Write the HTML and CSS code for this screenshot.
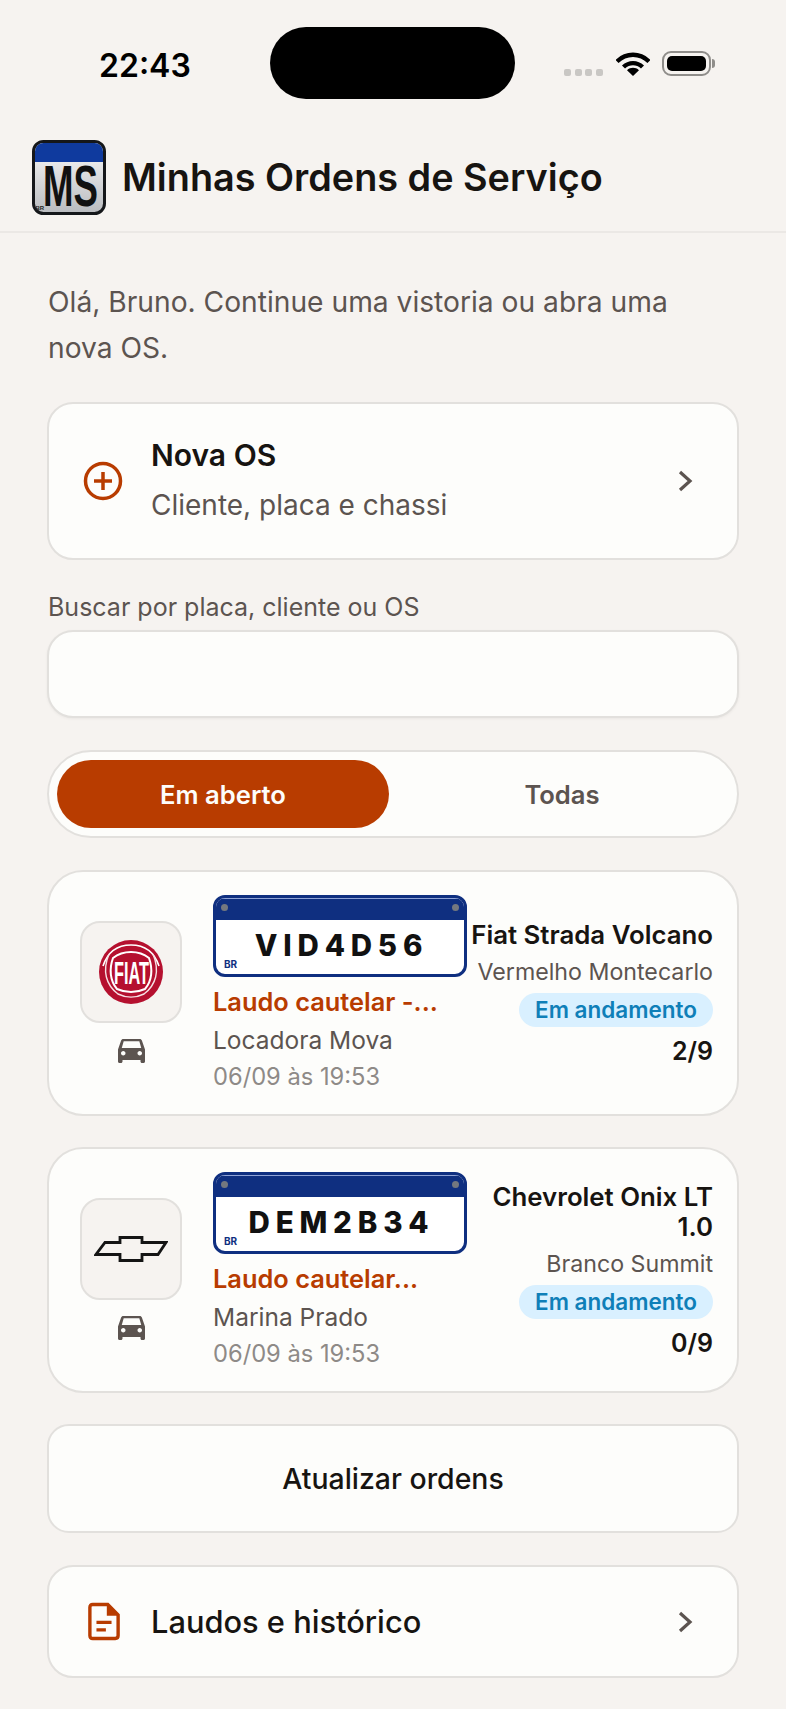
FILE: index.html
```html
<!DOCTYPE html>
<html lang="pt-BR">
    <head>
        <meta charset="utf-8">
        <title>Minhas Ordens de Serviço</title>
        <link rel="stylesheet" href="styles.css">
    </head>
    <body>
        <div class="statusbar">
            <span class="time">22:43</span>
            <div class="island"></div>
            <div class="status-icons">
                <div class="signal"><i></i><i></i><i></i><i></i></div>
                <svg class="wifi" width="34" height="24" viewBox="0 0 34 24">
                    <path d="M1 9.5C10 0.5 24 0.5 33 9.5" fill="none" stroke="#000" stroke-width="4.4"/>
                    <path d="M7.5 15C13 9.8 21 9.8 26.5 15" fill="none" stroke="#000" stroke-width="4.4"/>
                    <path d="M11 18.2C14.6 15 19.4 15 23 18.2L17 24Z" fill="#000"/>
                </svg>
                <div class="battery"><div class="battery-fill"></div></div>
            </div>
        </div>

        <header class="topbar">
            <svg class="logo" width="74" height="75" viewBox="0 0 74 75">
                <defs>
                    <linearGradient id="plateGrey" x1="0" y1="0" x2="0" y2="1">
                        <stop offset="0" stop-color="#fbfbfb"/>
                        <stop offset="1" stop-color="#b9bbbf"/>
                    </linearGradient>
                </defs>
                <rect x="1.5" y="1.5" width="71" height="72" rx="10" fill="url(#plateGrey)" stroke="#15171a" stroke-width="3"/>
                <path d="M3 22V11.500A8.500 8.500 0 0 1 11.500 3H62.500A8.500 8.500 0 0 1 71 11.500V22Z" fill="#0f3a9e"/>
                <text x="11" y="66" class="logo-ms" textLength="55" lengthAdjust="spacingAndGlyphs">MS</text>
                <text x="3.500" y="70" class="logo-br">BR</text>
            </svg>
            <h1>Minhas Ordens de Serviço</h1>
        </header>

        <main class="content">
            <p class="intro">Olá, Bruno. Continue uma vistoria ou abra uma nova OS.</p>

            <div class="card nova">
                <svg class="nova-icon" width="40" height="40" viewBox="0 0 40 40">
                    <circle cx="20" cy="20" r="17.500" fill="none" stroke="#b83c00" stroke-width="3.500"/>
                    <path d="M20 11V29M11 20H29" fill="none" stroke="#b83c00" stroke-width="3.500"/>
                </svg>
                <div class="nova-text">
                    <div class="nova-title">Nova OS</div>
                    <div class="nova-sub">Cliente, placa e chassi</div>
                </div>
                <svg class="chevron" width="16" height="24" viewBox="0 0 16 24">
                    <path d="M3 3L13 12L3 21" fill="none" stroke="#5c5450" stroke-width="3.200"/>
                </svg>
            </div>

            <label class="search-label" for="busca">Buscar por placa, cliente ou OS</label>
            <input class="search" id="busca" type="text">

            <div class="segment">
                <div class="seg-item active">Em aberto</div>
                <div class="seg-item">Todas</div>
            </div>

            <div class="card os">
                <div class="brand-col">
                    <div class="brand-tile">
                        <svg class="brand-logo" width="66" height="66" viewBox="0 0 66 66">
                            <circle cx="33" cy="33" r="32" fill="#b5102f"/>
                            <path d="M5 27C10 12 21 6 33 6S56 12 61 27" fill="none" stroke="#fff" stroke-width="1.600"/>
                            <path d="M11 15C4 32 8 46 20 55C28 59 38 59 46 55C58 46 62 32 55 15" fill="none" stroke="#f6dfe3" stroke-width="1.400"/>
                            <path d="M15 19C25 11 41 11 51 19C55 30 54 42 47 50C38 54 28 54 19 50C12 42 11 30 15 19Z" fill="#b5102f" stroke="#fff" stroke-width="2"/>
                            <text x="16" y="45" class="fiat-text" textLength="35" lengthAdjust="spacingAndGlyphs">FIAT</text>
                        </svg>
                    </div>
                    <svg class="car" width="27" height="24" viewBox="3 5 18 16">
                        <path fill="#5c5450" d="M18.920 6.010C18.720 5.420 18.160 5 17.500 5h-11c-.66 0-1.210.42-1.420 1.010L3 12v8c0 .55.45 1 1 1h1c.55 0 1-.45 1-1v-1h12v1c0 .55.45 1 1 1h1c.55 0 1-.45 1-1v-8l-2.080-5.990zM6.500 16c-.83 0-1.500-.67-1.500-1.500S5.670 13 6.500 13s1.500.67 1.500 1.500S7.330 16 6.500 16zm11 0c-.83 0-1.500-.67-1.500-1.500s.67-1.500 1.500-1.500 1.500.67 1.500 1.500-.67 1.500-1.500 1.500zM5.500 11l1.300-4.500h10.400L18.500 11z"/>
                    </svg>
                </div>
                <div class="os-main">
                    <div class="plate">
                        <div class="plate-top"><i></i><i></i></div>
                        <div class="plate-num">VID4D56</div>
                        <span class="plate-br">BR</span>
                    </div>
                    <div class="os-type">Laudo cautelar -...</div>
                    <div class="os-client">Locadora Mova</div>
                    <div class="os-date">06/09 às 19:53</div>
                </div>
                <div class="os-side">
                    <div class="os-car">Fiat Strada Volcano</div>
                    <div class="os-color">Vermelho Montecarlo</div>
                    <div class="badge">Em andamento</div>
                    <div class="os-count">2/9</div>
                </div>
            </div>

            <div class="card os">
                <div class="brand-col">
                    <div class="brand-tile">
                        <svg width="74" height="26" viewBox="0 0 74 26">
                            <path d="M11 6.500H26V1.500H48V6.500H72L64 18.500H48V24.500H26V18.500H2Z" fill="#f6f3f0" stroke="#141414" stroke-width="2.800"/>
                        </svg>
                    </div>
                    <svg class="car" width="27" height="24" viewBox="3 5 18 16">
                        <path fill="#5c5450" d="M18.920 6.010C18.720 5.420 18.160 5 17.500 5h-11c-.66 0-1.210.42-1.420 1.010L3 12v8c0 .55.45 1 1 1h1c.55 0 1-.45 1-1v-1h12v1c0 .55.45 1 1 1h1c.55 0 1-.45 1-1v-8l-2.080-5.990zM6.500 16c-.83 0-1.500-.67-1.500-1.500S5.670 13 6.500 13s1.500.67 1.500 1.500S7.330 16 6.500 16zm11 0c-.83 0-1.500-.67-1.500-1.500s.67-1.500 1.500-1.500 1.500.67 1.500 1.500-.67 1.500-1.500 1.500zM5.500 11l1.300-4.500h10.400L18.500 11z"/>
                    </svg>
                </div>
                <div class="os-main">
                    <div class="plate">
                        <div class="plate-top"><i></i><i></i></div>
                        <div class="plate-num">DEM2B34</div>
                        <span class="plate-br">BR</span>
                    </div>
                    <div class="os-type">Laudo cautelar...</div>
                    <div class="os-client">Marina Prado</div>
                    <div class="os-date">06/09 às 19:53</div>
                </div>
                <div class="os-side">
                    <div class="os-car">Chevrolet Onix LT 1.0</div>
                    <div class="os-color">Branco Summit</div>
                    <div class="badge">Em andamento</div>
                    <div class="os-count">0/9</div>
                </div>
            </div>

            <div class="card refresh">Atualizar ordens</div>

            <div class="card laudos">
                <svg class="doc" width="32" height="39" viewBox="0 0 34 40">
                    <path d="M5 2H21L32 13V35Q32 38 29 38H5Q2 38 2 35V5Q2 2 5 2Z" fill="none" stroke="#b83c00" stroke-width="3.600"/>
                    <path d="M20 2L32 14H20Z" fill="#b83c00"/>
                    <path d="M9 21H25M9 29H19" fill="none" stroke="#b83c00" stroke-width="3.400"/>
                </svg>
                <span class="laudos-text">Laudos e histórico</span>
                <svg class="chevron" width="16" height="24" viewBox="0 0 16 24">
                    <path d="M3 3L13 12L3 21" fill="none" stroke="#5c5450" stroke-width="3.200"/>
                </svg>
            </div>
        </main>
    </body>
</html>
```

FILE: styles.css
```css
*{
    margin: 0;
    padding: 0;
    box-sizing: border-box;
}
body{
    width: 786px;
    height: 1709px;
    overflow: hidden;
    background: #f6f3f0;
    color: #171411;
    font-family: Inter, "Liberation Sans", sans-serif;
}
.statusbar{
    height: 125px;
    padding-top: 27px;
    padding-left: 99px;
    display: flex;
    align-items: flex-start;
}
.time{
    width: 171px;
    margin-top: 20px;
    font-size: 32px;
    line-height: 38px;
    font-weight: 600;
    color: #000;
}
.island{
    width: 245px;
    height: 72px;
    border-radius: 36px;
    background: #000;
}
.status-icons{
    margin-left: 49px;
    margin-top: 24px;
    display: flex;
    align-items: flex-start;
}
.signal{
    display: flex;
    gap: 3.500px;
    margin-top: 18px;
}
.signal i{
    width: 7px;
    height: 7px;
    border-radius: 2px;
    background: #c9c7c4;
}
.wifi{
    margin-left: 13px;
    margin-top: 1px;
}
.battery{
    position: relative;
    width: 49px;
    height: 25px;
    margin-left: 12px;
    padding: 3px;
    border: 2px solid #8f8d8a;
    border-radius: 9px;
}
.battery::after{
    content: "";
    position: absolute;
    right: -6px;
    top: 6px;
    width: 3px;
    height: 9px;
    border-radius: 0 3px 3px 0;
    background: #8f8d8a;
}
.battery-fill{
    height: 100%;
    border-radius: 5px;
    background: #000;
}
.topbar{
    height: 108px;
    padding-left: 32px;
    padding-bottom: 2px;
    display: flex;
    align-items: center;
    gap: 16px;
    border-bottom: 2px solid #ebe8e5;
}
.topbar h1{
    font-size: 37.800px;
    font-weight: 600;
    white-space: nowrap;
}
.logo{
    overflow: visible;
}
.logo-ms{
    font-family: "Liberation Sans", sans-serif;
    font-size: 58px;
    font-weight: 700;
    fill: #111;
}
.logo-br{
    font-family: "Liberation Sans", sans-serif;
    font-size: 6px;
    font-weight: 700;
    fill: #222;
}
.content{
    padding: 46px 47px 0;
}
.intro{
    font-size: 28.200px;
    line-height: 46px;
    color: #5c5450;
    margin-bottom: 31px;
    padding-left: 1px;
    padding-right: 40px;
}
.card{
    border: 2px solid #e2e0dd;
    border-radius: 26px;
    background: #fdfdfb;
    display: flex;
    align-items: center;
}
.nova{
    height: 158px;
    padding: 0 44px 0 34px;
}
.nova-text{
    flex: 1;
    margin-left: 28px;
}
.nova-title{
    font-size: 30px;
    line-height: 36px;
    font-weight: 600;
    margin-top: -2px;
}
.nova-sub{
    font-size: 28px;
    line-height: 36px;
    margin-top: 14px;
    color: #5c5450;
}
.search-label{
    display: block;
    margin-top: 32px;
    padding-left: 1px;
    font-size: 25px;
    line-height: 30px;
    color: #5c5450;
}
.search{
    display: block;
    width: 100%;
    height: 88px;
    margin-top: 8px;
    border: 2px solid #e2e0dd;
    border-radius: 26px;
    background: #fdfdfb;
    box-shadow: 0 1px 3px rgba(0, 0, 0, 0.05);
    outline: none;
}
.segment{
    height: 88px;
    margin-top: 32px;
    padding: 8px;
    border: 2px solid #e2e0dd;
    border-radius: 44px;
    background: #fdfdfb;
    display: flex;
}
.seg-item{
    width: 332px;
    display: flex;
    justify-content: center;
    align-items: center;
    border-radius: 36px;
    font-size: 25.600px;
    font-weight: 600;
    color: #5c5450;
}
.seg-item + .seg-item{
    flex: 1;
    padding-left: 6px;
}
.seg-item.active{
    background: #b83c00;
    color: #fdfdfb;
}
.os{
    height: 246px;
    margin-top: 32px;
    padding: 0 24px 0 31px;
    border-radius: 36px;
}
.os + .os{
    margin-top: 31px;
}
.brand-col{
    width: 102px;
    padding-bottom: 3px;
    display: flex;
    flex-direction: column;
    align-items: center;
    flex: none;
}
.brand-tile{
    width: 102px;
    height: 102px;
    border: 2px solid #e2e0dd;
    border-radius: 20px;
    background: #f6f3f0;
    display: flex;
    justify-content: center;
    align-items: center;
}
.brand-logo{
    overflow: visible;
}
.car{
    margin-top: 16px;
}
.os-main{
    width: 254px;
    margin-left: 31px;
    flex: none;
}
.plate{
    position: relative;
    height: 82px;
    border: 3px solid #0f2f80;
    border-radius: 12px;
    background: #fff;
    overflow: hidden;
}
.plate-top{
    height: 22px;
    padding: 5px 5px 0;
    background: #0f2f80;
    border-top: 1px solid #8fa3d6;
    display: flex;
    justify-content: space-between;
}
.plate-top i{
    width: 7px;
    height: 7px;
    border-radius: 50%;
    background: #74787f;
}
.plate-num{
    text-align: center;
    font-size: 29.500px;
    line-height: 51px;
    font-weight: 800;
    letter-spacing: 5.800px;
    padding-left: 3px;
    color: #111;
}
.plate-br{
    position: absolute;
    left: 8px;
    bottom: 4px;
    font-size: 10px;
    line-height: 12px;
    font-weight: 700;
    color: #0f2f80;
}
.os-type{
    margin-top: 10px;
    font-size: 25.400px;
    line-height: 30px;
    font-weight: 600;
    color: #b83c00;
    white-space: nowrap;
}
.os-client{
    margin-top: 8px;
    font-size: 24.500px;
    line-height: 30px;
    color: #5c5450;
}
.os-date{
    margin-top: 7px;
    font-size: 23.700px;
    line-height: 30px;
    color: #8e8a87;
}
.os-side{
    width: 246px;
    flex: none;
    display: flex;
    flex-direction: column;
    align-items: flex-end;
    text-align: right;
}
.os-car{
    font-size: 25.800px;
    line-height: 30px;
    font-weight: 600;
}
.os-color{
    margin-top: 7px;
    font-size: 23.200px;
    line-height: 30px;
    color: #5c5450;
}
.badge{
    margin-top: 6px;
    height: 34px;
    padding: 0 16px;
    border-radius: 17px;
    background: #d9f0ff;
    color: #0f7fb8;
    font-size: 22.500px;
    line-height: 34px;
    font-weight: 600;
}
.os-count{
    margin-top: 8px;
    font-size: 25px;
    line-height: 32px;
    font-weight: 600;
}
.refresh{
    height: 109px;
    margin-top: 31px;
    justify-content: center;
    font-size: 28.400px;
    font-weight: 500;
    border-radius: 22px;
}
.laudos{
    height: 113px;
    margin-top: 32px;
    padding: 0 44px 0 39px;
}
.laudos-text{
    flex: 1;
    margin-left: 31px;
    font-size: 30.800px;
    font-weight: 500;
}
.fiat-text{
    font-family: "Liberation Sans", sans-serif;
    font-size: 31px;
    font-weight: 700;
    fill: #fff;
}
```
